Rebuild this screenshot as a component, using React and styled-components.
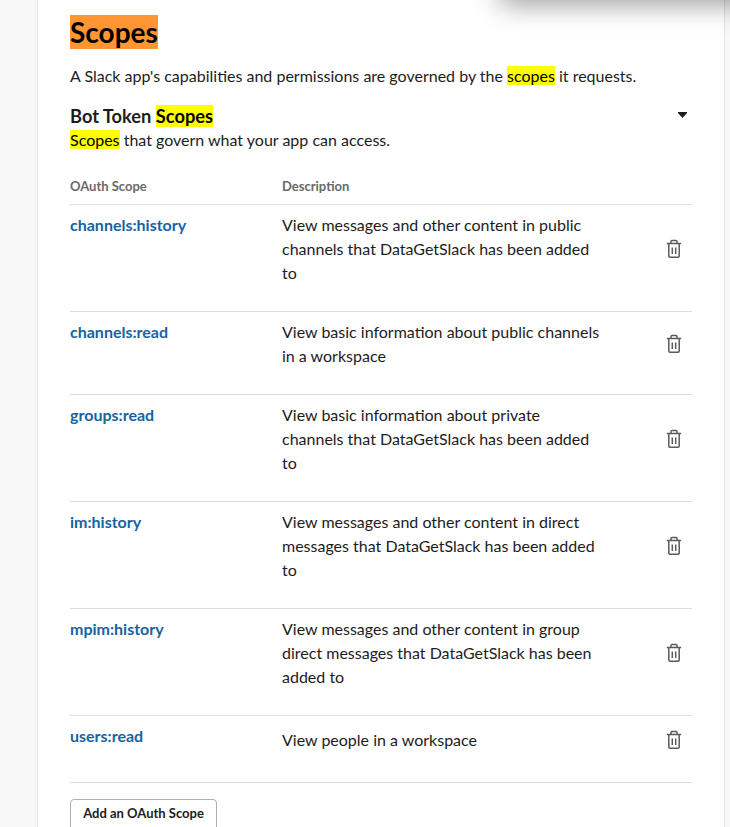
import React from "react";
import styled, { createGlobalStyle } from "styled-components";

const Global = createGlobalStyle`
  html, body { margin: 0; padding: 0; background: #f8f8f8; }
  body { font-family: Lato, "Liberation Sans", sans-serif; color: #1d1c1d; }
`;
const Page = styled.div`
  position: relative;
  width: 730px;
  height: 827px;
  overflow: hidden;
  background: #f8f8f8;
`;
const Card = styled.main`
  box-sizing: border-box;
  width: 688px;
  height: 827px;
  margin-left: 37px;
  padding: 15px 32px 0;
  background: #fff;
  border-left: 1px solid #e4e4e4;
  border-right: 1px solid #e4e4e4;
`;
const Popover = styled.div`
  position: absolute;
  top: -40px;
  left: 500px;
  width: 300px;
  height: 40px;
  background: #fff;
  box-shadow: 0 4px 28px rgba(0, 0, 0, 0.4);
`;
const Title = styled.h1`
  margin: 0;
  font-size: 28px;
  font-weight: 700;
  line-height: 34px;
  color: #000;
`;
const Orange = styled.span`
  display: inline-block;
  background: #ff9632;
`;
const Mark = styled.span`
  background: #ff0;
  color: #000;
`;
const Lead = styled.p`
  margin: 15px 0 0;
  font-size: 16px;
  line-height: 24px;
`;
const SectionHead = styled.div`
  display: flex;
  justify-content: space-between;
  margin-top: 17px;
`;
const SectionTitle = styled.h2`
  margin: 0;
  font-size: 18.25px;
  font-weight: 700;
  line-height: 23px;
`;
const Caret = styled.svg`
  width: 9px;
  height: 6px;
  margin: 7px 5px 0 0;
  fill: #1d1c1d;
`;
const SectionSub = styled.p`
  margin: 0;
  font-size: 16px;
  line-height: 24px;
`;
const TableHead = styled.div`
  display: grid;
  grid-template-columns: 212px 1fr;
  margin-top: 22px;
  padding-bottom: 6px;
  font-size: 13px;
  font-weight: 700;
  line-height: 24px;
  color: #696969;
  border-bottom: 1px solid #dddddd;
`;
const Row = styled.div`
  display: grid;
  grid-template-columns: 212px 320px 1fr;
  padding: 8px 0 26px;
  min-height: 32px;
  border-bottom: 1px solid #dddddd;
`;
const ScopeName = styled.a`
  font-size: 16px;
  font-weight: 700;
  line-height: 24px;
  color: #1a62a0;
`;
const Desc = styled.div`
  align-self: center;
  font-size: 16px;
  line-height: 24px;
`;
const Trash = styled.svg`
  align-self: center;
  justify-self: end;
  width: 20px;
  height: 20px;
  margin-right: 8px;
  fill: none;
  stroke: #5c5b5c;
  stroke-width: 1.5;
`;
const AddButton = styled.button`
  display: block;
  box-sizing: border-box;
  width: 147px;
  height: 36px;
  margin-top: 16px;
  padding: 0 0 8px;
  font-family: inherit;
  font-size: 13px;
  font-weight: 700;
  color: #1d1c1d;
  background: #fff;
  border: 1px solid #b0b0b0;
  border-radius: 4px;
  text-align: center;
  line-height: 27px;
`;

const TrashIcon = () => (
  <Trash viewBox="0 0 20 20">
    <path d="M2.8 4.5h14.4" />
    <path d="M7 4.5V2.5c0-.5.4-.9.9-.9h4.2c.5 0 .9.4.9.9v2" />
    <path d="M4.8 4.5v12.5c0 .7.5 1.2 1.2 1.2h8c.7 0 1.2-.5 1.2-1.2V4.5" />
    <path d="M8.3 8.5v6.5M11.7 8.5v6.5" />
  </Trash>
);

const scopes = [
  ["channels:history", "View messages and other content in public channels that DataGetSlack has been added to"],
  ["channels:read", "View basic information about public channels in a workspace"],
  ["groups:read", "View basic information about private channels that DataGetSlack has been added to"],
  ["im:history", "View messages and other content in direct messages that DataGetSlack has been added to"],
  ["mpim:history", "View messages and other content in group direct messages that DataGetSlack has been added to"],
  ["users:read", "View people in a workspace"],
];

export default function App() {
  return (
    <Page>
      <Global />
      <Card>
        <Title><Orange>Scopes</Orange></Title>
        <Lead>A Slack app's capabilities and permissions are governed by the <Mark>scopes</Mark> it requests.</Lead>
        <SectionHead>
          <SectionTitle>Bot Token <Mark>Scopes</Mark></SectionTitle>
          <Caret viewBox="0 0 9 6"><path d="M0 0h9v1L4.5 6 0 1z" /></Caret>
        </SectionHead>
        <SectionSub><Mark>Scopes</Mark> that govern what your app can access.</SectionSub>
        <TableHead><span>OAuth Scope</span><span>Description</span></TableHead>
        {scopes.map(([name, desc]) => (
          <Row key={name}>
            <ScopeName>{name}</ScopeName>
            <Desc>{desc}</Desc>
            <TrashIcon />
          </Row>
        ))}
        <AddButton>Add an OAuth Scope</AddButton>
      </Card>
      <Popover />
    </Page>
  );
}
